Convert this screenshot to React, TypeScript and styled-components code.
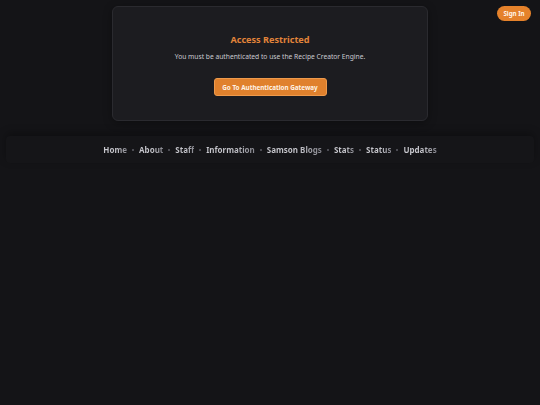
import React from "react";
import styled, { createGlobalStyle } from "styled-components";

const Global = createGlobalStyle`
  html, body { margin: 0; padding: 0; background: #141417; }
  body { font-family: "Noto Sans", "Open Sans", sans-serif; min-height: 405px; }
  * { box-sizing: border-box; }
`;

const Page = styled.div`
  width: 540px;
  min-height: 405px;
  background: #141417;
  display: flex;
  flex-direction: column;
  align-items: center;
  position: relative;
`;

const SignIn = styled.button`
  position: absolute;
  top: 6px;
  right: 9px;
  width: 34px;
  height: 15px;
  border: none;
  border-radius: 8px;
  background: #e5822b;
  color: #fff5ea;
  font-family: "Noto Sans", sans-serif;
  font-weight: 700;
  font-size: 6.2px;
  padding: 0;
  display: flex;
  align-items: center;
  justify-content: center;
`;

const Card = styled.div`
  margin-top: 6px;
  width: 316px;
  height: 115px;
  background: #1c1c20;
  border: 1px solid #2a2a2f;
  border-radius: 6px;
  display: flex;
  flex-direction: column;
  align-items: center;
  padding-top: 27px;
  box-shadow: 0 2px 8px rgba(0, 0, 0, 0.35);
`;

const Title = styled.h1`
  margin: 0;
  color: #e2843a;
  font-size: 9.1px;
  font-weight: 700;
  line-height: 12px;
`;

const Message = styled.p`
  margin: 6px 0 0;
  color: #cacad0;
  font-size: 6.7px;
  line-height: 9px;
`;

const Gateway = styled.button`
  margin-top: 17px;
  width: 113px;
  height: 18px;
  border: 1px solid #ee9a4c;
  border-radius: 3px;
  background: #e0812d;
  color: #fff3e6;
  font-family: "Noto Sans", sans-serif;
  font-weight: 700;
  font-size: 6.3px;
  padding: 0;
`;

const Footer = styled.nav`
  margin-top: 15px;
  width: 528px;
  height: 27px;
  background: #151518;
  border-radius: 4px;
  box-shadow: 0 -3px 8px rgba(0, 0, 0, 0.3);
  display: flex;
  align-items: center;
  justify-content: center;
  gap: 5px;
`;

const Link = styled.span`
  font-size: 8px;
  font-weight: 700;
  line-height: 10px;
  background: linear-gradient(90deg, #c8c8ce 0%, #c8c8ce 55%, #84848c 100%);
  -webkit-background-clip: text;
  background-clip: text;
  color: transparent;
`;

const Dot = styled.span`
  width: 2px;
  height: 2px;
  border-radius: 50%;
  background: #5d5d64;
`;

const links = ["Home", "About", "Staff", "Information", "Samson Blogs", "Stats", "Status", "Updates"];

export default function App() {
  return (
    <>
      <Global />
      <Page>
        <SignIn>Sign In</SignIn>
        <Card>
          <Title>Access Restricted</Title>
          <Message>You must be authenticated to use the Recipe Creator Engine.</Message>
          <Gateway>Go To Authentication Gateway</Gateway>
        </Card>
        <Footer>
          {links.map((l, i) => (
            <React.Fragment key={l}>
              {i > 0 && <Dot />}
              <Link>{l}</Link>
            </React.Fragment>
          ))}
        </Footer>
      </Page>
    </>
  );
}
